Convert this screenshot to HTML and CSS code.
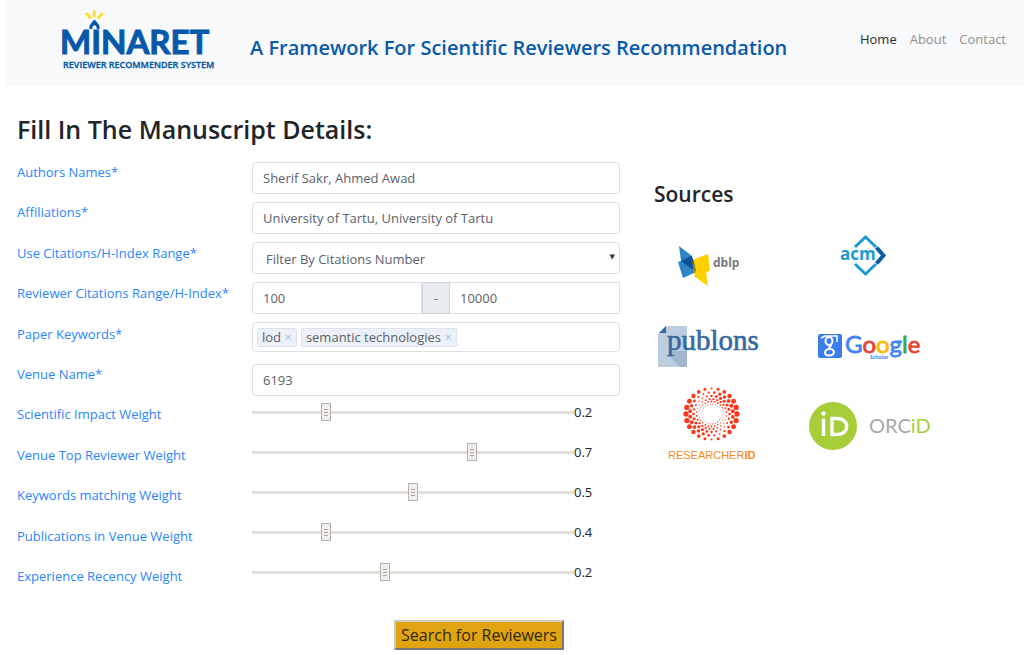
FILE: index.html
```html
<!DOCTYPE html>
<html lang="en">
<head>
<meta charset="utf-8">
<meta name="viewport" content="width=device-width, initial-scale=1">
<title>MINARET</title>
<link rel="stylesheet" href="styles.css">
</head>
<body>
<header class="header">
  <svg class="brand" viewBox="0 0 152 64" role="img" aria-label="Minaret">
    <g class="brand-rays">
      <path d="M32.300 3.500v4.500M25 6l3 3.500M40 6l-3.400 3.500"/>
    </g>
    <path class="brand-flame" d="M27.500 21C26.500 17 30 14.500 32.500 11.500C35 14.500 38.500 17 37.500 21H34.600C35.200 19 33.800 17.800 32.500 17C31.200 17.800 29.800 19 30.400 21Z"/>
    <text class="brand-name" x="-2" y="46">MINARET</text>
    <text class="brand-sub" x="1" y="60">REVIEWER RECOMMENDER SYSTEM</text>
  </svg>
  <h1 class="tagline">A Framework For Scientific Reviewers Recommendation</h1>
  <nav class="nav">
    <a class="nav-link active" href="#">Home</a>
    <a class="nav-link" href="#about">About</a>
    <a class="nav-link" href="#contact">Contact</a>
  </nav>
</header>
<main class="main">
  <form class="form">
    <h2 class="form-title">Fill In The Manuscript Details:</h2>
    <div class="form-body">
      <div class="labels">
        <label for="authors">Authors Names*</label>
        <label for="affiliations">Affiliations*</label>
        <label for="filter">Use Citations/H-Index Range*</label>
        <label for="range-min">Reviewer Citations Range/H-Index*</label>
        <label for="keywords">Paper Keywords*</label>
        <label for="venue">Venue Name*</label>
        <label for="impact">Scientific Impact Weight</label>
        <label for="top">Venue Top Reviewer Weight</label>
        <label for="matching">Keywords matching Weight</label>
        <label for="publications">Publications in Venue Weight</label>
        <label for="recency">Experience Recency Weight</label>
      </div>
      <div class="fields">
        <input class="control" id="authors" type="text" value="Sherif Sakr, Ahmed Awad">
        <input class="control" id="affiliations" type="text" value="University of Tartu, University of Tartu">
        <div class="select-wrap">
          <select class="control select" id="filter"><option>Filter By Citations Number</option><option>Filter By H-Index</option></select>
        </div>
        <div class="group">
          <input class="control group-start" id="range-min" type="text" value="100">
          <span class="group-dash">-</span>
          <input class="control group-end" type="text" value="10000" aria-label="Maximum">
        </div>
        <div class="control tags">
          <span class="tag">lod <button class="tag-remove" type="button" aria-label="Remove lod">×</button></span>
          <span class="tag">semantic technologies <button class="tag-remove" type="button" aria-label="Remove semantic technologies">×</button></span>
          <input class="tag-input" id="keywords" type="text">
        </div>
        <input class="control venue" id="venue" type="text" value="6193">
        <div class="sliders">
          <div class="slider"><input id="impact" type="range" min="0" max="1" step="0.01" value="0.22"><output for="impact">0.2</output></div>
          <div class="slider"><input id="top" type="range" min="0" max="1" step="0.01" value="0.69"><output for="top">0.7</output></div>
          <div class="slider"><input id="matching" type="range" min="0" max="1" step="0.01" value="0.5"><output for="matching">0.5</output></div>
          <div class="slider"><input id="publications" type="range" min="0" max="1" step="0.01" value="0.22"><output for="publications">0.4</output></div>
          <div class="slider"><input id="recency" type="range" min="0" max="1" step="0.01" value="0.41"><output for="recency">0.2</output></div>
        </div>
      </div>
    </div>
    <button class="submit" type="submit">Search for Reviewers</button>
  </form>
  <section class="sources">
    <h3 class="sources-title">Sources</h3>
    <div class="logos">
      <svg viewBox="0 0 120 80" role="img" aria-label="dblp">
        <path fill="#2e86c8" d="M25 21L38 31L42 47L29 53L24 37L27 36Z"/>
        <path fill="#fdd000" d="M38 35L54 29L56 45L52 48L54 61L41 52Z"/>
        <path fill="#0b519c" d="M27 36L37 31L39 34L42 46L38 44Z"/>
        <path fill="#a58a1e" d="M38 35L42 46L40 49Z"/>
        <text class="logo-dblp" x="59" y="42">dblp</text>
      </svg>
      <svg viewBox="0 0 130 80" role="img" aria-label="ACM">
        <g fill="none" stroke-width="3">
          <path stroke="#1b9ad2" d="M51 22L61.500 12L72 22M51 39L61.500 49L72 39"/>
          <path stroke="#0c5ba6" stroke-width="4" d="M72.500 22.500L79.500 30.500L72.500 38.500"/>
        </g>
        <text class="logo-acm" x="36" y="35">acm</text>
      </svg>
      <svg viewBox="0 0 120 80" role="img" aria-label="Publons">
        <path fill="#bccddd" d="M12 21H33V62H4V29Z"/>
        <path fill="#a3b7cc" d="M14 50L20 46H33V62H26Z"/>
        <path fill="#2f679f" d="M5 28L12 21V28Z"/>
        <text class="logo-publons" x="13" y="45">publons</text>
      </svg>
      <svg viewBox="0 0 130 80" role="img" aria-label="Google Scholar">
        <rect x="14" y="29" width="24" height="24" rx="2" fill="#3b7ded"/>
        <g fill="none" stroke="#fff" stroke-width="2">
          <ellipse cx="25" cy="36" rx="3.500" ry="4"/>
          <path d="M27 39.500C28 42 24 42 25 43.500C28 44 30 45 30 47.500C29 51.500 21 51.500 21 47.500C21 45 24 44 26 44"/>
          <path d="M17 33L21 31H33V37" stroke-width="1.500"/>
        </g>
        <text class="logo-google" x="41" y="48"><tspan class="g-blue">G</tspan><tspan class="g-red">o</tspan><tspan class="g-yellow">o</tspan><tspan class="g-blue">g</tspan><tspan class="g-green">l</tspan><tspan class="g-red">e</tspan></text>
        <text class="logo-scholar" x="66" y="54">Scholar</text>
      </svg>
      <svg viewBox="0 0 120 80" role="img" aria-label="ResearcherID">
        <g id="dots" fill="#f8391b"></g>
        <text class="logo-rid" x="14" y="74">RESEARCHER<tspan font-weight="700">ID</tspan></text>
      </svg>
      <svg viewBox="0 0 130 80" role="img" aria-label="ORCID">
        <circle cx="29" cy="41" r="24" fill="#a6ce39"/>
        <circle cx="19.500" cy="28.500" r="2.200" fill="#fff"/>
        <path fill="none" stroke="#fff" stroke-width="3.400" d="M19.500 33.500V51M28 33.500V49.500H33C46 49.500 46 33.500 33 33.500Z"/>
        <text class="logo-orcid" x="65" y="48">ORC<tspan class="orcid-id">iD</tspan></text>
      </svg>
    </div>
  </section>
</main>
<script src="dots.js"></script>
</body>
</html>
```
FILE: styles.css
```css
* { box-sizing: border-box; }
body {
  margin: 0;
  background: #fff;
  color: #212529;
  font: 13px/20px "Open Sans", "Noto Sans", sans-serif;
}
h1, h2, h3 { margin: 0; }
input, select, button { font: inherit; color: inherit; }

.header {
  display: flex;
  align-items: flex-start;
  margin-left: 6px;
  padding: 8px 18px 14px 56px;
  background: #f8f9fa;
}
.brand { width: 152px; height: 64px; flex: none; overflow: visible; }
.brand-rays { fill: none; stroke: #fbdf2b; stroke-width: 3; stroke-linecap: round; }
.brand-flame, .brand-name, .brand-sub { fill: #0659a9; }
.brand-name { font: 700 33px Lato, sans-serif; stroke: #0659a9; stroke-width: 1; }
.brand-sub { font: 600 9px "Open Sans", sans-serif; stroke: #0659a9; stroke-width: 0.300; }
.tagline {
  margin: 26px 0 0 36px;
  color: #0a5aa8;
  font-size: 20px;
  line-height: 28px;
  font-weight: 600;
  white-space: nowrap;
}
.nav { display: flex; gap: 13px; margin: 21px 0 0 auto; }
.nav-link { color: #8f9193; text-decoration: none; }
.nav-link.active { color: #2b2d2f; }

.main {
  display: grid;
  grid-template-columns: 603fr 370fr;
  column-gap: 34px;
  padding: 27px 0 0 17px;
}
.form-title { font-size: 25px; line-height: 32px; font-weight: 600; }
.form-body {
  display: grid;
  grid-template-columns: 235fr 368fr;
  margin-top: 17px;
}
.labels {
  display: flex;
  flex-direction: column;
  justify-content: space-between;
  align-items: flex-start;
  color: #2a86fb;
}
.fields { display: flex; flex-direction: column; gap: 8px; min-width: 0; }
.control {
  width: 100%;
  height: 32px;
  min-width: 0;
  padding: 0 10px;
  border: 1px solid #dcdfe3;
  border-radius: 4px;
  background: #fff;
  color: #5b6269;
}
.select-wrap { position: relative; }
.select { display: block; appearance: none; padding: 2px 24px 0 13px; }
.select-wrap::after {
  content: "▼";
  position: absolute;
  top: 5px;
  right: 5px;
  font: 7px/20px "DejaVu Sans", sans-serif;
  color: #343a40;
  pointer-events: none;
}
.group { display: grid; grid-template-columns: 1fr 28px 1fr; }
.group-start { border-radius: 4px 0 0 4px; }
.group-end { border-radius: 0; border-left: 0; }
.group-dash {
  display: grid;
  place-items: center;
  border: 1px solid #ced4da;
  background: #e9ecef;
  color: #6c757d;
}
.tags { display: flex; align-items: center; gap: 4px; height: 30px; padding: 0 4px; }
.tag {
  flex: none;
  padding: 0 4px;
  border: 1px solid #d9e2ef;
  border-radius: 2px;
  background: #ecf1f8;
  line-height: 17px;
}
.tag-remove { padding: 0; border: 0; background: none; color: #a9c0de; }
.tag-input { flex: 1; min-width: 0; border: 0; outline: 0; background: none; }
.venue { margin-top: 4px; }
.sliders { display: grid; gap: 20px; padding: 0 0 4px; margin-top: -2px; }
.slider { display: flex; align-items: center; height: 20px; }
.slider input {
  flex: 1;
  min-width: 0;
  height: 18px;
  margin: 0;
  appearance: none;
  background: none;
}
.slider input::-webkit-slider-runnable-track { height: 3px; background: #e4deda; }
.slider input::-webkit-slider-thumb {
  appearance: none;
  width: 10px;
  height: 18px;
  margin-top: -8px;
  border: 1px solid #b5b1ac;
  background: linear-gradient(#aaa6a1 1px, transparent 1px 3px, #aaa6a1 3px 4px, transparent 4px 6px, #aaa6a1 6px 7px, transparent 7px) 2px 5px / 4px 8px no-repeat, #f1efed;
}
.slider output { width: 46px; }
.submit {
  display: block;
  margin: 34px 56px 0 auto;
  padding: 2px 5px;
  border: 2px outset #cfcbc4;
  background: #e0a311;
  color: #2f2808;
  font-size: 16px;
  line-height: 22px;
}

.sources { padding-top: 67px; }
.sources-title { font-size: 21px; line-height: 28px; font-weight: 600; }
.logos { display: grid; grid-template-columns: 120px 130px; column-gap: 30px; margin-top: 17px; }
.logos svg { width: 100%; height: 80px; overflow: visible; }
.logo-dblp { font: 700 12px "Open Sans", sans-serif; fill: #77797c; }
.logo-acm { font: 700 17px "Open Sans", sans-serif; fill: #1b9ad2; }
.logo-publons { font: 29px "Liberation Serif", serif; fill: #35699f; stroke: #35699f; stroke-width: 0.600; }
.logo-google { font: 24px Lato, sans-serif; stroke-width: 0.800; }
.g-blue { fill: #4285f4; stroke: #4285f4; }
.g-red { fill: #ea4335; stroke: #ea4335; }
.g-yellow { fill: #fbbc05; stroke: #fbbc05; }
.g-green { fill: #34a853; stroke: #34a853; }
.logo-scholar { font: 700 5px "Open Sans", sans-serif; fill: #4285f4; }
.logo-rid { font: 11px "Liberation Sans", sans-serif; fill: #f58a1f; }
.logo-orcid { font: 20px Lato, sans-serif; fill: #a6a8ab; }
.orcid-id { fill: #a6ce39; }
```
FILE: dots.js
```js
// Concentric rings of dots; each ring's heavy axis is turned a little further.
const group = document.getElementById("dots");
const rings = [[25.5, 2.7], [21.5, 2], [18, 1.6], [15, 1.2], [12.5, 0.9], [10, 0.6]];
rings.forEach(([radius, size], ring) => {
  for (let i = 0; i < 24; i++) {
    const angle = ((i + (ring % 2) / 2) * Math.PI) / 12;
    const weight = Math.abs(Math.cos(angle + ring * 0.35));
    const dot = document.createElementNS("http://www.w3.org/2000/svg", "circle");
    dot.setAttribute("cx", 57.5 + radius * Math.cos(angle));
    dot.setAttribute("cy", 29 + radius * Math.sin(angle));
    dot.setAttribute("r", size * (0.4 + 0.6 * weight));
    group.appendChild(dot);
  }
});
```
